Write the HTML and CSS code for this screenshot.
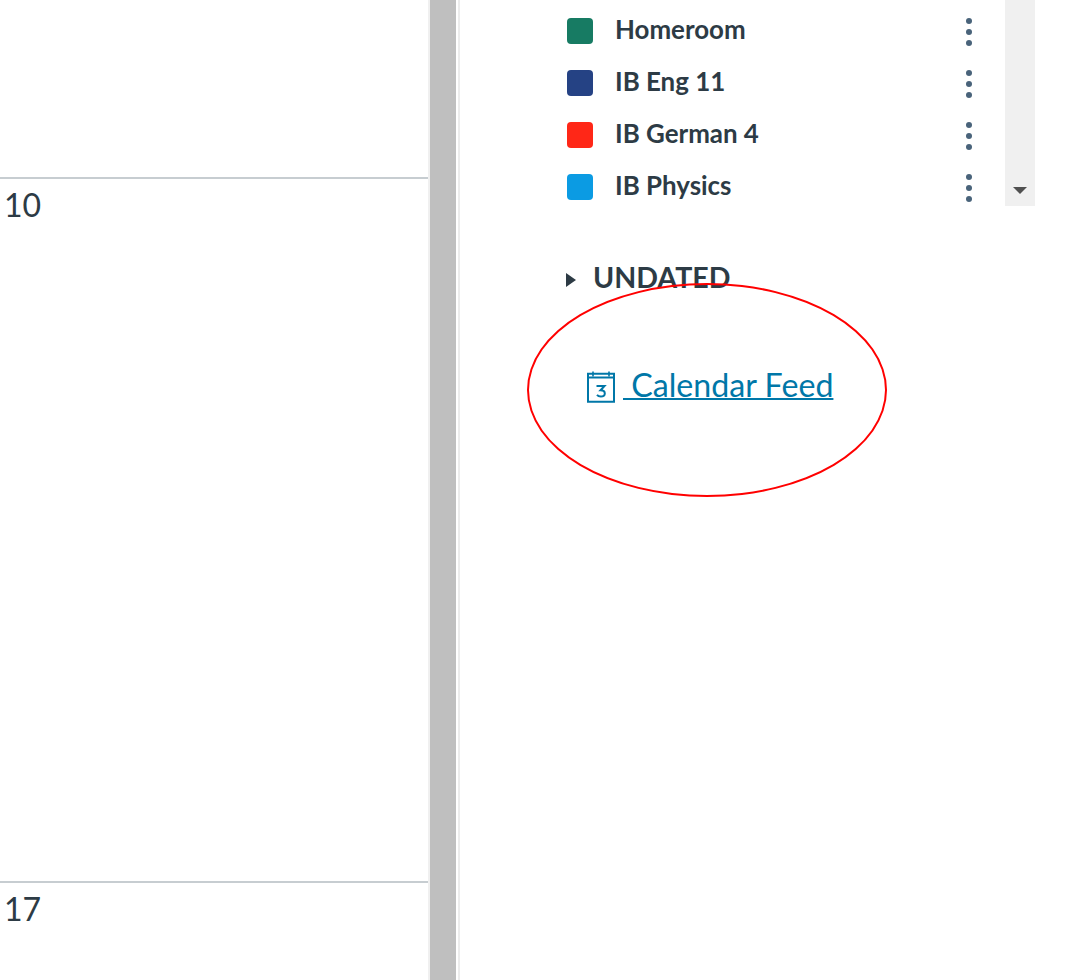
FILE: index.html
```html
<!DOCTYPE html>
<html lang="en">
<head>
    <meta charset="UTF-8">
    <meta name="viewport" content="width=device-width, initial-scale=1.0">
    <title>Calendar</title>
    <link rel="stylesheet" href="styles.css">
</head>
<body>
    <div class="page">
        <main class="month">
            <div class="week-cut"></div>
            <div class="week"><span class="day">10</span></div>
            <div class="week"><span class="day">17</span></div>
        </main>

        <div class="splitter"></div>

        <aside class="sidebar">
            <div class="calendars">
                <ul class="calendar-list">
                    <li class="calendar-item">
                        <span class="swatch swatch-green"></span>
                        <span class="calendar-name">Homeroom</span>
                        <span class="kebab"><i></i><i></i><i></i></span>
                    </li>
                    <li class="calendar-item">
                        <span class="swatch swatch-navy"></span>
                        <span class="calendar-name">IB Eng 11</span>
                        <span class="kebab"><i></i><i></i><i></i></span>
                    </li>
                    <li class="calendar-item">
                        <span class="swatch swatch-red"></span>
                        <span class="calendar-name">IB German 4</span>
                        <span class="kebab"><i></i><i></i><i></i></span>
                    </li>
                    <li class="calendar-item">
                        <span class="swatch swatch-blue"></span>
                        <span class="calendar-name">IB Physics</span>
                        <span class="kebab"><i></i><i></i><i></i></span>
                    </li>
                </ul>
                <div class="scrollbar"><span class="scroll-arrow"></span></div>
            </div>

            <div class="undated">
                <span class="undated-arrow"></span>
                <span class="undated-label">UNDATED</span>
            </div>

            <a class="feed-link" href="#">
                <svg class="feed-icon" viewBox="0 0 28 32" width="28" height="32" fill="none" stroke="currentColor" stroke-width="2">
                    <path d="M1 2.800h26v28H1z"/>
                    <path d="M1 6.500h26"/>
                    <path d="M6 .5v5M22 .5v5" stroke-width="1.600"/>
                    <path d="M9.500 15h8l-4 4.300c2.600 0 4.300 1.200 4.300 3.100 0 1.900-1.700 3.100-4 3.100-1.600 0-2.900-.5-3.800-1.600" stroke-width="2"/>
                </svg>
                <span>&nbsp;Calendar Feed</span>
            </a>

            <div class="highlight"></div>
        </aside>
    </div>
</body>
</html>
```

FILE: styles.css
```css
* {
    box-sizing: border-box;
}
html, body {
    height: 100%;
}
body {
    margin: 0;
    overflow: hidden;
    font-family: Lato, "Open Sans", sans-serif;
    color: #2d3b45;
    background-color: white;
}
.page {
    display: flex;
    height: 980px;
    overflow: hidden;
}
.month {
    width: 428px;
    flex-shrink: 0;
}
.week-cut {
    height: 177px;
}
.week {
    height: 704px;
    border-top: 2px solid #c7cdd1;
    padding: 8px 0 0 4px;
}
.day {
    font-size: 32px;
    line-height: 36px;
}
.splitter {
    width: 30px;
    flex-shrink: 0;
    background-color: #bfbfbf;
    border-left: 2px solid #f0f0f0;
    border-right: 2px solid white;
}
.sidebar {
    position: relative;
    flex: 1;
    border-left: 2px solid #ececec;
}
.calendars {
    position: relative;
    height: 206px;
}
.calendar-list {
    list-style: none;
    margin: 0;
    padding: 5px 0 0 107px;
}
.calendar-item {
    display: flex;
    align-items: center;
    height: 52px;
}
.swatch {
    width: 26px;
    height: 26px;
    border-radius: 4px;
    margin-right: 22px;
    flex-shrink: 0;
}
.swatch-green { background-color: #177b63; }
.swatch-navy { background-color: #254284; }
.swatch-red { background-color: #ff2717; }
.swatch-blue { background-color: #0b9be3; }
.calendar-name {
    width: 351px;
    padding-bottom: 4px;
    font-size: 25.900px;
    font-weight: 700;
    white-space: nowrap;
}
.kebab {
    display: flex;
    flex-direction: column;
    gap: 5.300px;
    width: 6px;
    margin-top: 2px;
}
.kebab i {
    width: 6px;
    height: 6px;
    border-radius: 50%;
    background-color: #49637a;
}
.scrollbar {
    position: absolute;
    top: 0;
    left: 545px;
    width: 30px;
    height: 206px;
    background-color: #f0f0f0;
}
.scroll-arrow {
    position: absolute;
    left: 8px;
    top: 187px;
    border-left: 7px solid transparent;
    border-right: 7px solid transparent;
    border-top: 7px solid #505050;
}
.undated {
    display: flex;
    align-items: center;
    margin: 52px 0 0 106px;
    height: 38px;
}
.undated-arrow {
    border-top: 7px solid transparent;
    border-bottom: 7px solid transparent;
    border-left: 10px solid #2d3b45;
    margin: 6px 17px 0 0;
}
.undated-label {
    font-size: 28.600px;
    font-weight: 700;
}
.feed-link {
    display: inline-flex;
    align-items: center;
    margin: 69px 0 0 127px;
    color: #0077a8;
    font-size: 32.200px;
    text-decoration: none;
}
.feed-icon {
    flex-shrink: 0;
    margin: 4px 8px 0 0;
}
.feed-link span {
    text-decoration: underline;
    text-decoration-thickness: 2px;
}
.highlight {
    position: absolute;
    left: 67px;
    top: 283px;
    width: 360px;
    height: 214px;
    border: 2px solid red;
    border-radius: 50%;
}
```
